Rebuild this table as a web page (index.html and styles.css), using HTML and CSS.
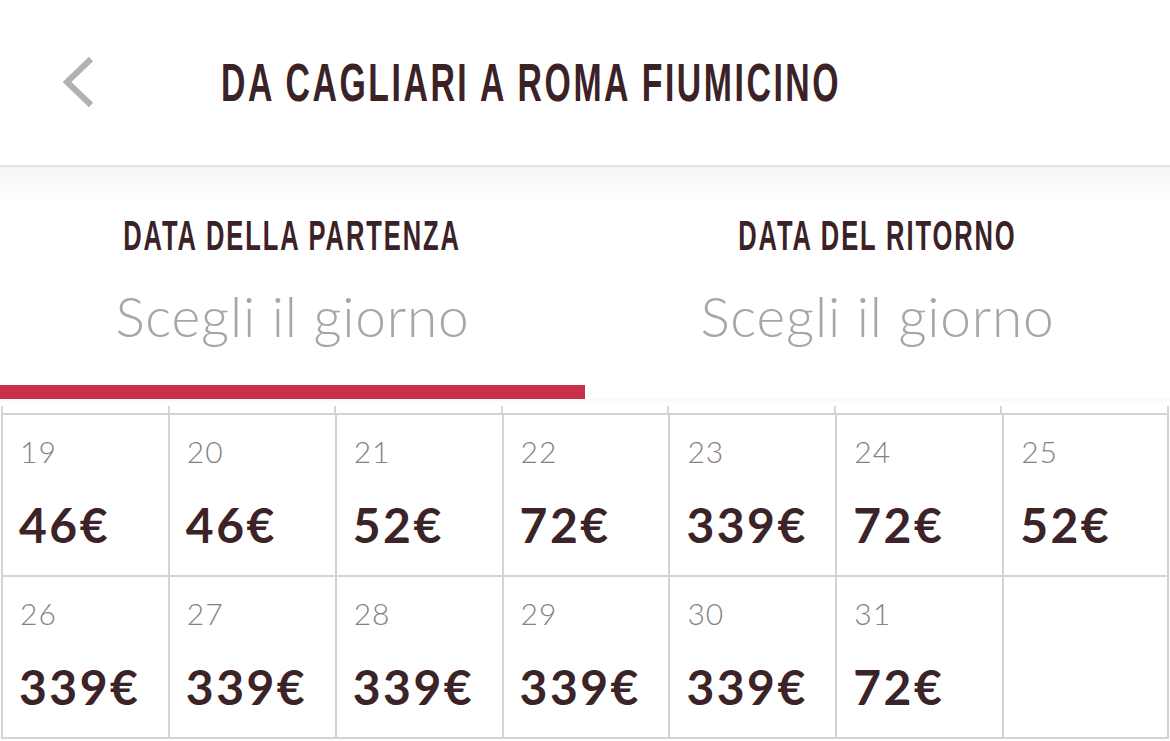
FILE: index.html
```html
<!DOCTYPE html>
<html lang="it">
<head>
<meta charset="utf-8">
<title>Da Cagliari a Roma Fiumicino</title>
<link rel="stylesheet" href="styles.css">
</head>
<body>
<header class="topbar">
  <button class="back" aria-label="Indietro">
    <svg width="36" height="52" viewBox="0 0 36 52"><path d="M31 3 L7 26 L31 49" fill="none" stroke="#b4b0b1" stroke-width="6"/></svg>
  </button>
  <h1 class="title"><span class="cond title-text">DA CAGLIARI A ROMA FIUMICINO</span></h1>
</header>
<nav class="tabs">
  <div class="tab">
    <div class="tab-label"><span class="cond label-text">DATA DELLA PARTENZA</span></div>
    <div class="tab-value">Scegli il giorno</div>
  </div>
  <div class="tab">
    <div class="tab-label"><span class="cond label-text">DATA DEL RITORNO</span></div>
    <div class="tab-value">Scegli il giorno</div>
  </div>
</nav>
<div class="track"><div class="indicator"></div></div>
<div class="ticks"><span></span><span></span><span></span><span></span><span></span><span></span><span></span></div>
<main class="cal">
  <div class="cell"><div class="day">19</div><div class="price">46€</div></div>
  <div class="cell"><div class="day">20</div><div class="price">46€</div></div>
  <div class="cell"><div class="day">21</div><div class="price">52€</div></div>
  <div class="cell"><div class="day">22</div><div class="price">72€</div></div>
  <div class="cell"><div class="day">23</div><div class="price">339€</div></div>
  <div class="cell"><div class="day">24</div><div class="price">72€</div></div>
  <div class="cell last"><div class="day">25</div><div class="price">52€</div></div>
  <div class="cell bottom"><div class="day">26</div><div class="price">339€</div></div>
  <div class="cell bottom"><div class="day">27</div><div class="price">339€</div></div>
  <div class="cell bottom"><div class="day">28</div><div class="price">339€</div></div>
  <div class="cell bottom"><div class="day">29</div><div class="price">339€</div></div>
  <div class="cell bottom"><div class="day">30</div><div class="price">339€</div></div>
  <div class="cell bottom"><div class="day">31</div><div class="price">72€</div></div>
  <div class="cell bottom last empty"></div>
</main>
</body>
</html>
```
FILE: styles.css
```css
* { box-sizing: border-box; }
html, body { margin: 0; padding: 0; background: #fff; }
body { width: 1170px; overflow: hidden; font-family: "Lato", "Liberation Sans", sans-serif; }

.topbar {
  height: 167px;
  display: flex;
  align-items: center;
  padding: 0 0 2px 60px;
  border-bottom: 2px solid #e4e3e3;
}
.back {
  border: 0;
  background: none;
  padding: 0;
  display: flex;
  width: 36px;
  height: 52px;
}
.title {
  margin: 0 0 0 125px;
  font-size: 53px;
  line-height: 1;
  font-weight: 700;
  color: #3b2226;
  white-space: nowrap;
}
.cond {
  display: inline-block;
  font-family: "Liberation Sans", Arial, sans-serif;
  font-weight: 700;
  letter-spacing: 0.075em;
  white-space: nowrap;
}
.title-text { transform: scaleX(0.638); transform-origin: left center; }

.tabs {
  display: flex;
  background: linear-gradient(#f5f5f5, #fff 36px);
}
.tab {
  flex: 1;
  display: flex;
  flex-direction: column;
  align-items: center;
  padding: 46px 0 41px;
}
.tab-label {
  font-size: 42px;
  line-height: 1;
  color: #3b2226;
  height: 42px;
}
.label-text { transform: scaleX(0.607); transform-origin: center; }
.tab-value {
  margin-top: 34px;
  font-family: "Lato", sans-serif;
  font-weight: 300;
  font-size: 55px;
  letter-spacing: 0.8px;
  line-height: 1;
  color: #aba4a5;
}

.track { height: 14px; }
.indicator { width: 585px; height: 14px; background: #c9304b; }

.ticks {
  display: flex;
  height: 14px;
  padding: 7px 1px 0;
  background: linear-gradient(#faf7f7, #fff 4px);
}
.ticks span { flex: 1; border-left: 2px solid #d6d4d4; }
.ticks span:last-child { border-right: 2px solid #d6d4d4; }

.cal {
  display: grid;
  grid-template-columns: repeat(7, 1fr);
  padding: 0 1px;
}
.cell {
  height: 162px;
  border-top: 2px solid #d4d2d2;
  border-left: 2px solid #d4d2d2;
  padding: 21px 0 0 16px;
}
.cell.last { border-right: 2px solid #d4d2d2; }
.cell.bottom { height: 164px; border-bottom: 2px solid #d4d2d2; }
.day {
  padding-left: 1px;
  font-family: "Lato", sans-serif;
  font-weight: 300;
  font-size: 30px;
  letter-spacing: 1px;
  line-height: 1;
  color: #878183;
}
.price {
  margin-top: 35px;
  font-family: "Lato", sans-serif;
  font-weight: 700;
  font-size: 48px;
  letter-spacing: 2.5px;
  line-height: 1;
  color: #3b2327;
}
```
